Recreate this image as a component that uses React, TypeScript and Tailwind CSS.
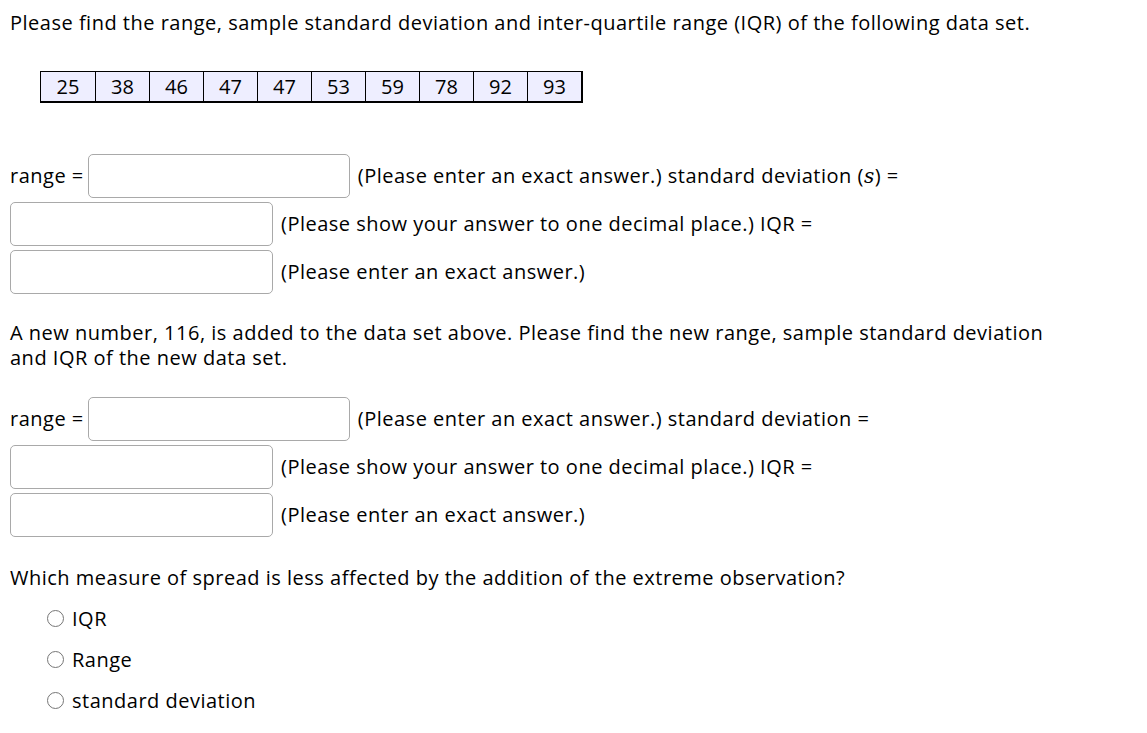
import React from 'react';

const font = { fontFamily: '"Open Sans", "Noto Sans", sans-serif' };

const data = [25, 38, 46, 47, 47, 53, 59, 78, 92, 93];

function Box({ wide }: { wide?: boolean }) {
  return (
    <input
      type="text"
      className={`h-[44px] ${wide ? 'w-[262px]' : 'w-[263px]'} rounded-[5px] border border-[#a9a9a9] bg-white shrink-0`}
    />
  );
}

function Radio({ label }: { label: string }) {
  return (
    <label className="flex items-center h-[41px] pl-[37px]">
      <span className="w-[17px] h-[17px] rounded-full border border-[#767676] bg-white shrink-0" />
      <span className="ml-[8px]">{label}</span>
    </label>
  );
}

function AnswerBlock({ sdLabel }: { sdLabel: React.ReactNode }) {
  return (
    <div className="flex flex-col gap-[4px]">
      <div className="flex items-center h-[44px]">
        <span className="mr-[4px]">range =</span>
        <Box wide />
        <span className="ml-[8px]">(Please enter an exact answer.) {sdLabel}</span>
      </div>
      <div className="flex items-center h-[44px]">
        <Box />
        <span className="ml-[8px]">(Please show your answer to one decimal place.) IQR =</span>
      </div>
      <div className="flex items-center h-[44px]">
        <Box />
        <span className="ml-[8px]">(Please enter an exact answer.)</span>
      </div>
    </div>
  );
}

export default function App() {
  return (
    <div className="min-h-screen bg-white text-black text-[20px] tracking-[0.5px] px-[10px] pt-[9px]" style={font}>
      <p className="leading-[28px]">
        Please find the range, sample standard deviation and inter-quartile range (IQR) of the following data set.
      </p>

      <div className="mt-[34px] ml-[30px] inline-flex border-t border-l border-black border-b-2 border-r-2 bg-[#eeeeff] tracking-normal">
        {data.map((n, i) => (
          <div
            key={i}
            className={`w-[54px] h-[29px] flex items-center justify-center ${i > 0 ? 'border-l border-black' : ''}`}
          >
            {n}
          </div>
        ))}
      </div>

      <div className="mt-[51px]">
        <AnswerBlock
          sdLabel={
            <>
              standard deviation (
              <span className="italic" style={{ fontFamily: '"DejaVu Serif", serif' }}>s</span>) =
            </>
          }
        />
      </div>

      <p className="mt-[26px] leading-[25px]">
        A new number, 116, is added to the data set above. Please find the new range, sample standard deviation
        <br />
        and IQR of the new data set.
      </p>

      <div className="mt-[27px]">
        <AnswerBlock sdLabel="standard deviation =" />
      </div>

      <p className="mt-[26px] leading-[30px]">
        Which measure of spread is less affected by the addition of the extreme observation?
      </p>
      <div className="mt-[5px] flex flex-col">
        <Radio label="IQR" />
        <Radio label="Range" />
        <Radio label="standard deviation" />
      </div>
    </div>
  );
}
